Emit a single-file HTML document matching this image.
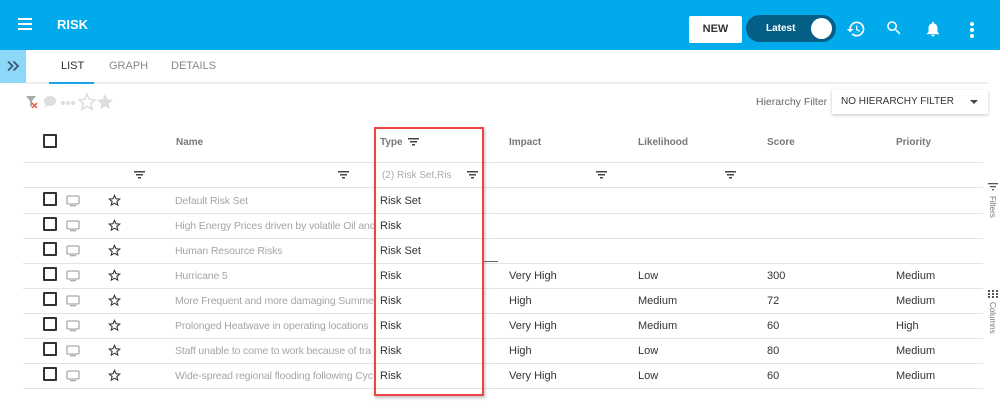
<!DOCTYPE html>
<html><head><meta charset="utf-8"><style>
*{margin:0;padding:0;box-sizing:border-box}
body{width:1000px;height:413px;overflow:hidden;background:#fff;font-family:"Liberation Sans",Arial,sans-serif;position:relative}
.a{position:absolute}
.hdr{left:0;top:0;width:1000px;height:50px;background:#00aaeb}
.t{font-size:11px;white-space:nowrap}
.hl{height:1px;background:#e4e4e4;left:23px;width:960px}
.cb{width:14px;height:14px;border:2px solid #333;border-radius:1px}
.g{color:#a5a5a5;font-size:10.5px;letter-spacing:-0.15px}
.d{color:#333}
.hd{font-size:10px;font-weight:bold;color:#777}
</style></head><body>
<div class="a hdr"></div>
<div class="a" style="left:18px;top:18px;width:14px;height:2px;background:#fff;box-shadow:0 5px 0 #fff,0 10px 0 #fff"></div>
<div class="a" style="left:57px;top:17px;color:#fff;font-weight:bold;font-size:13px">RISK</div>
<div class="a" style="left:689px;top:16px;width:53px;height:27px;background:#fff;border-radius:2px;font-size:11px;font-weight:bold;color:#333;text-align:center;line-height:27px">NEW</div>
<div class="a" style="left:746px;top:15px;width:90px;height:27px;background:#045e86;border-radius:14px"></div>
<div class="a" style="left:766px;top:23px;color:#fff;font-size:10px;font-weight:bold">Latest</div>
<div class="a" style="left:811px;top:18px;width:21px;height:21px;background:#fff;border-radius:50%"></div>
<svg class="a" style="left:846px;top:19px" width="20" height="20" viewBox="0 0 24 24"><path fill="#fff" d="M13 3a9 9 0 0 0-9 9H1l3.9 3.9L9 12H6a7 7 0 1 1 2.1 5L6.7 18.4A9 9 0 1 0 13 3zm-1 5v5l4.3 2.5.7-1.2-3.5-2.1V8z"/></svg>
<svg class="a" style="left:885px;top:19px" width="18" height="18" viewBox="0 0 24 24"><path fill="#fff" d="M15.5 14h-.8l-.3-.3A6.5 6.5 0 1 0 9.5 16a6.5 6.5 0 0 0 4.2-1.6l.3.3v.8l5 5 1.5-1.5zm-6 0a4.5 4.5 0 1 1 0-9 4.5 4.5 0 0 1 0 9z"/></svg>
<svg class="a" style="left:924px;top:19px" width="18" height="20" viewBox="0 0 24 24"><path fill="#fff" d="M12 22a2 2 0 0 0 2-2h-4a2 2 0 0 0 2 2zm6-6v-5c0-3.1-1.6-5.6-4.5-6.3V4a1.5 1.5 0 0 0-3 0v.7C7.6 5.4 6 7.9 6 11v5l-2 2v1h16v-1z"/></svg>
<div class="a" style="left:970px;top:22px;width:4px;height:4px;background:#fff;border-radius:50%;box-shadow:0 6px 0 #fff,0 12px 0 #fff"></div>
<!-- tabs -->
<div class="a" style="left:0;top:50px;width:26px;height:33px;background:#8dd8f8"></div>
<svg class="a" style="left:6px;top:60px" width="14" height="12" viewBox="0 0 14 12"><path d="M2 1.5l4.5 4.5L2 10.5M7.5 1.5L12 6l-4.5 4.5" fill="none" stroke="#3a5a70" stroke-width="1.8"/></svg>
<div class="a" style="left:26px;top:82px;width:962px;height:2px;background:#eee"></div>
<div class="a" style="left:49px;top:82px;width:45px;height:2px;background:#1aa3e8"></div>
<div class="a t" style="left:61px;top:60px;font-size:11px;color:#333">LIST</div>
<div class="a t" style="left:109px;top:60px;color:#888">GRAPH</div>
<div class="a t" style="left:171px;top:60px;color:#888">DETAILS</div>
<!-- toolbar icons -->
<svg class="a" style="left:25px;top:93px" width="90" height="18" viewBox="0 0 90 18">
<path d="M1 3h10l-4 5v6l-2-1V8z" fill="#aaa"/><path d="M7 10l5 5M12 10l-5 5" stroke="#e54" stroke-width="1.5"/>
<ellipse cx="25" cy="8" rx="6" ry="5" fill="#ddd"/><path d="M21 11l-2 4 5-3z" fill="#ddd"/>
<circle cx="38" cy="10" r="2" fill="#ddd"/><circle cx="43" cy="10" r="2" fill="#ddd"/><circle cx="48" cy="10" r="2" fill="#ddd"/>
<path d="M62 1l2.3 5.4 5.7.5-4.4 3.8 1.4 5.6L62 13.3 57 16.3l1.4-5.6L54 6.9l5.7-.5z" fill="none" stroke="#ddd" stroke-width="1.5"/>
<path d="M80 1l2.3 5.4 5.7.5-4.4 3.8 1.4 5.6L80 13.3 75 16.3l1.4-5.6L72 6.9l5.7-.5z" fill="#ddd"/>
</svg>
<div class="a t" style="left:756px;top:96px;color:#666;font-size:10.5px">Hierarchy Filter</div>
<div class="a" style="left:832px;top:90px;width:156px;height:24px;background:#fff;box-shadow:0 1px 3px rgba(0,0,0,.25)"></div>
<div class="a t" style="left:841px;top:96px;color:#333;font-size:10px">NO HIERARCHY FILTER</div>
<div class="a" style="left:970px;top:100px;border:4px solid transparent;border-top:4px solid #444;border-bottom:0"></div>
<!-- header -->
<div class="a cb" style="left:43px;top:134px"></div>
<div class="a hd" style="left:176px;top:137px">Name</div>
<div class="a hd" style="left:380px;top:137px">Type</div>
<div class="a hd" style="left:509px;top:137px">Impact</div>
<div class="a hd" style="left:638px;top:137px">Likelihood</div>
<div class="a hd" style="left:767px;top:137px">Score</div>
<div class="a hd" style="left:896px;top:137px">Priority</div>
<div class="a hl" style="top:162px"></div>
<div class="a hl" style="top:187px"></div>
<svg width="0" height="0" style="position:absolute"><defs><g id="f"><rect x="0" y="0" width="11" height="1.5" fill="#444"/><rect x="2" y="3" width="7" height="1.5" fill="#444"/><rect x="4" y="6" width="3" height="1.5" fill="#444"/></g></defs></svg>
<svg class="a" style="left:134px;top:171px" width="12" height="8"><use href="#f"/></svg>
<svg class="a" style="left:338px;top:171px" width="12" height="8"><use href="#f"/></svg>
<svg class="a" style="left:408px;top:138px" width="12" height="8"><use href="#f"/></svg>
<svg class="a" style="left:467px;top:171px" width="12" height="8"><use href="#f"/></svg>
<svg class="a" style="left:596px;top:171px" width="12" height="8"><use href="#f"/></svg>
<svg class="a" style="left:725px;top:171px" width="12" height="8"><use href="#f"/></svg>
<div class="a t" style="left:382px;top:170px;color:#aaa;font-size:10px">(2) Risk Set,Ris</div>
<!-- rows -->
<div id="rows"></div>
<div class="a" style="left:374px;top:127px;width:110px;height:269px;border:2px solid #ee4444;box-shadow:1px 2px 3px rgba(0,0,0,.25)"></div>
<div class="a" style="left:484px;top:261px;width:14px;height:1px;background:#666"></div>
<!-- right side -->
<svg class="a" style="left:988px;top:183px" width="10" height="8"><rect width="10" height="1.3" fill="#555"/><rect x="2" y="3" width="6" height="1.3" fill="#555"/><rect x="4" y="6" width="2" height="1.3" fill="#555"/></svg>
<div class="a" style="left:988px;top:196px;font-size:8px;color:#777;writing-mode:vertical-rl">Filters</div>
<svg class="a" style="left:988px;top:290px" width="10" height="8"><g fill="#555"><rect x="0" y="0" width="2" height="2"/><rect x="4" y="0" width="2" height="2"/><rect x="8" y="0" width="2" height="2"/><rect x="0" y="3" width="2" height="2"/><rect x="4" y="3" width="2" height="2"/><rect x="8" y="3" width="2" height="2"/><rect x="0" y="6" width="2" height="2"/><rect x="4" y="6" width="2" height="2"/><rect x="8" y="6" width="2" height="2"/></g></svg>
<div class="a" style="left:988px;top:302px;font-size:8px;color:#777;writing-mode:vertical-rl">Columns</div>
<script>
var R=[["Default Risk Set","Risk Set"],["High Energy Prices driven by volatile Oil and","Risk"],["Human Resource Risks","Risk Set"],["Hurricane 5","Risk","Very High","Low","300","Medium"],["More Frequent and more damaging Summer","Risk","High","Medium","72","Medium"],["Prolonged Heatwave in operating locations","Risk","Very High","Medium","60","High"],["Staff unable to come to work because of tra","Risk","High","Low","80","Medium"],["Wide-spread regional flooding following Cyc","Risk","Very High","Low","60","Medium"]];
var h="";R.forEach(function(r,i){var y=188+i*25;var ty=y+7;
h+='<div class="a cb" style="left:43px;top:'+(y+4)+'px"></div>';
h+='<svg class="a" style="left:66px;top:'+(y+7)+'px" width="14" height="12"><rect x="1" y="1" width="12" height="8" rx="1" fill="none" stroke="#aaa" stroke-width="1.3"/><rect x="4" y="10" width="6" height="1.3" fill="#aaa"/></svg>';
h+='<svg class="a" style="left:108px;top:'+(y+6)+'px" width="13" height="13" viewBox="0 0 24 24"><path d="M12 2.5l2.8 6.3 6.8.6-5.2 4.5 1.6 6.7L12 17l-6 3.6 1.6-6.7-5.2-4.5 6.8-.6z" fill="none" stroke="#333" stroke-width="2"/></svg>';
h+='<div class="a t g" style="left:175px;top:'+ty+'px;width:199px;overflow:hidden">'+r[0]+'</div>';
h+='<div class="a t d" style="left:380px;top:'+ty+'px">'+r[1]+'</div>';
if(r[2]){h+='<div class="a t d" style="left:509px;top:'+ty+'px">'+r[2]+'</div><div class="a t d" style="left:638px;top:'+ty+'px">'+r[3]+'</div><div class="a t d" style="left:767px;top:'+ty+'px">'+r[4]+'</div><div class="a t d" style="left:896px;top:'+ty+'px">'+r[5]+'</div>';}
h+='<div class="a hl" style="top:'+(y+25)+'px"></div>';});
document.getElementById("rows").innerHTML=h;
</script>
</body></html>
